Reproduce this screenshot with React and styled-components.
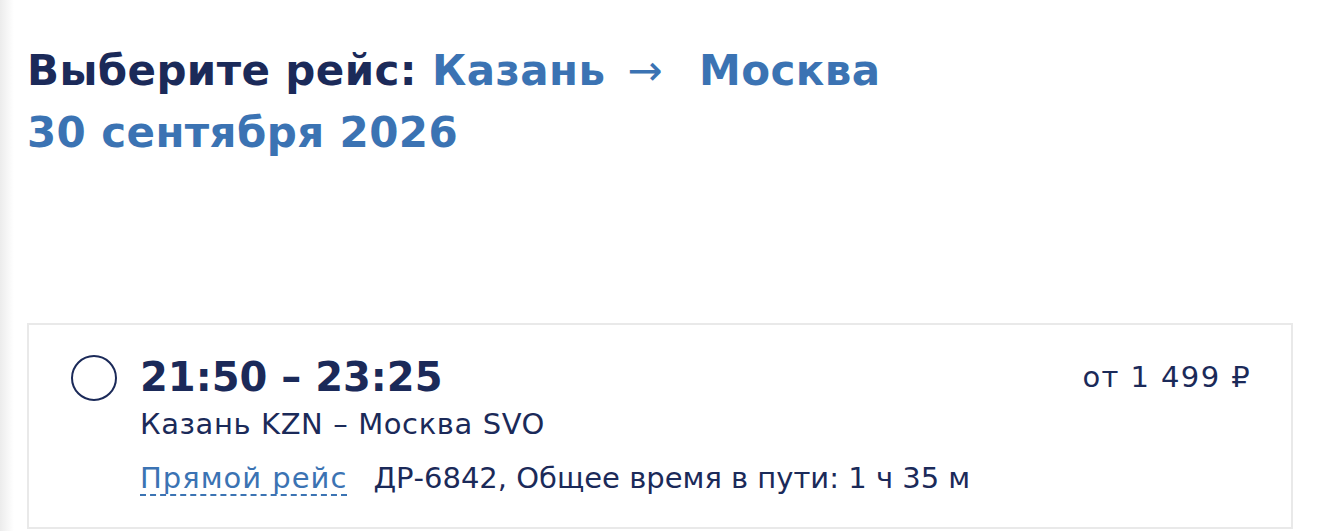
import React from "react";
import styled, { createGlobalStyle } from "styled-components";

const NAVY = "#1b2a59";
const BLUE = "#3b73b3";

const GlobalStyle = createGlobalStyle`
  html, body {
    margin: 0;
    padding: 0;
    background: #fff;
  }
  body {
    font-family: "DejaVu Sans", "Noto Sans", sans-serif;
    color: ${NAVY};
  }
`;

const Page = styled.div`
  width: 1320px;
  height: 531px;
  box-sizing: border-box;
  overflow: hidden;
  background: linear-gradient(to right, #ececec 0px, #f7f7f7 8px, #fff 14px);
  padding: 40px 27px 0 27px;
`;

const Title = styled.h1`
  margin: 0;
  font-size: 42px;
  font-weight: 600;
  line-height: 62px;
  letter-spacing: 0.4px;
  color: ${NAVY};
`;

const Accent = styled.span`
  color: ${BLUE};
`;

const Arrow = styled.span`
  display: inline-block;
  font-weight: 400;
  margin: 0 36px 0 22px;
`;

const Card = styled.div`
  margin-top: 159px;
  height: 206px;
  box-sizing: border-box;
  width: 1266px;
  border: 2px solid #e9e9e9;
  padding: 25px 40px 0 42px;
  display: flex;
  align-items: flex-start;
`;

const Radio = styled.span`
  flex: none;
  width: 46px;
  height: 46px;
  box-sizing: border-box;
  border: 2px solid ${NAVY};
  border-radius: 50%;
  margin-top: 5px;
  margin-right: 23px;
`;

const Info = styled.div`
  flex: 1;
  display: flex;
  flex-direction: column;
`;

const Times = styled.div`
  font-size: 40px;
  font-weight: 600;
  line-height: 54px;
`;

const Route = styled.div`
  font-size: 29px;
  line-height: 40px;
  letter-spacing: 0.6px;
`;

const Details = styled.div`
  margin-top: 16px;
  font-size: 29px;
  line-height: 36px;
  display: flex;
  align-items: baseline;
  gap: 26px;
`;

const DirectLink = styled.span`
  color: ${BLUE};
  letter-spacing: 1px;
  border-bottom: 2px dashed ${BLUE};
  line-height: 32px;
`;

const Price = styled.div`
  font-size: 29px;
  line-height: 54px;
  letter-spacing: 1.4px;
  white-space: nowrap;
`;

export default function App() {
  return (
    <>
      <GlobalStyle />
      <Page>
        <Title>
          Выберите рейс: <Accent>Казань<Arrow>→</Arrow>Москва</Accent>
          <br />
          <Accent>30 сентября 2026</Accent>
        </Title>
        <Card>
          <Radio />
          <Info>
            <Times>21:50 – 23:25</Times>
            <Route>Казань KZN – Москва SVO</Route>
            <Details>
              <DirectLink>Прямой рейс</DirectLink>
              <span>ДР-6842, Общее время в пути: 1 ч 35 м</span>
            </Details>
          </Info>
          <Price>от 1 499 ₽</Price>
        </Card>
      </Page>
    </>
  );
}
